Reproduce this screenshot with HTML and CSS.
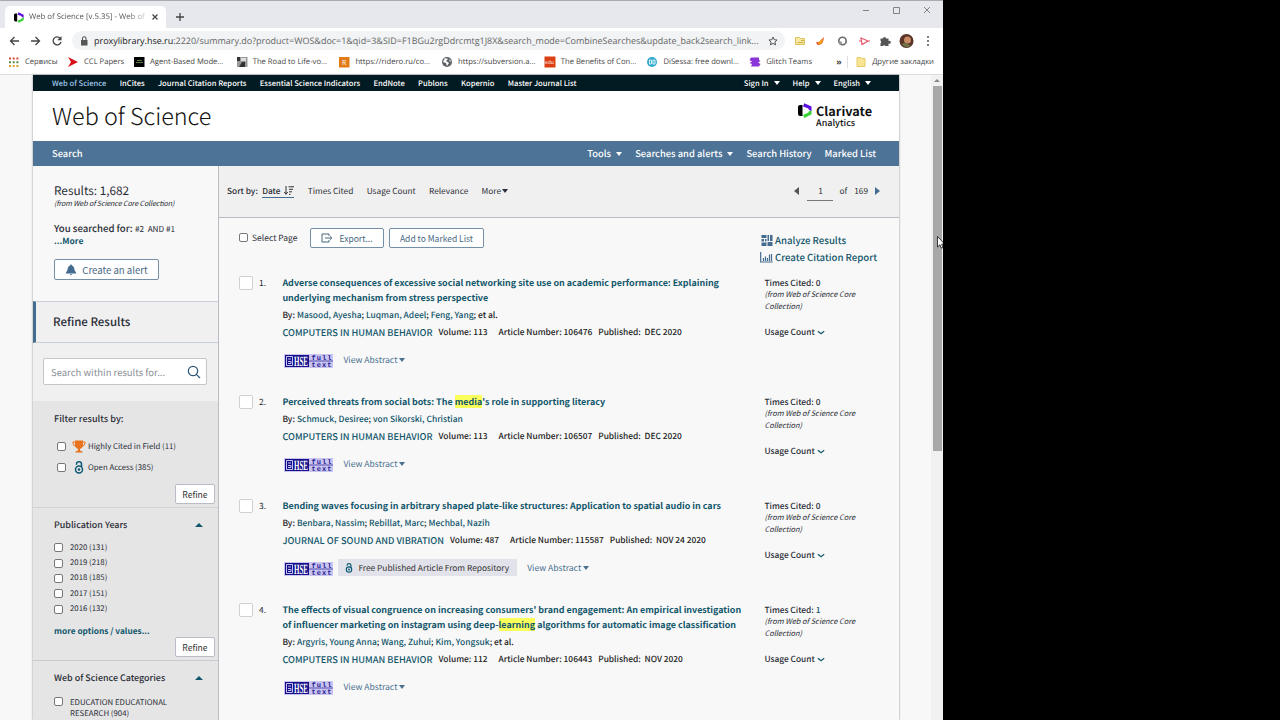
FILE: index.html
```html
<!DOCTYPE html>
<html lang="en">
<head>
  <meta charset="UTF-8">
  <title>Web of Science [v.5.35] - Web of Science</title>
  <link rel="stylesheet" href="styles.css">
</head>
<body>
<svg width="0" height="0" class="sprite">
  <symbol id="clarivate" viewBox="0 0 14 15">
    <path fill="#000" d="M4.500 2v11H2Q0 13 0 11V4Q0 2 2 2z"/>
    <path fill="#5b0fdc" d="M6.300.200 13.500 3.500V8.300L10.500 6.500V5.500L5 3.600z"/>
    <path fill="#36d430" d="M13.500 7.500v3.700L6.500 15 5 12l5.500-2.500V8.500z"/>
  </symbol>
  <symbol id="oa" viewBox="0 0 10 13">
    <g fill="none" stroke="#0e5a73" stroke-width="1.500"><circle cx="5" cy="8.500" r="3.500"/><path d="M2.500 3.700V3a2.500 2.200 0 0 1 5 0v3"/></g>
    <circle cx="5" cy="8.500" r="1.300" fill="#0e5a73"/>
  </symbol>
  <symbol id="hse" viewBox="0 0 49 14">
    <path fill="#c9c3f0" d="M0 0h49v14H0z"/>
    <path fill="#15108a" d="M1 1h24v12H1z"/>
    <path fill="none" stroke="#c9c3f0" d="M2.500 2.500h6v9h-6zM4 5h3M4 7.500h3v2H4"/>
    <text x="10" y="11.800" class="hse-name" textLength="14" lengthAdjust="spacingAndGlyphs">HSE</text>
    <path fill="#3b32a0" d="M25 6.600h24v.8H25z"/>
    <text x="27.500" y="6" class="hse-sub" textLength="20">full</text>
    <text x="27.500" y="12.800" class="hse-sub" textLength="20">text</text>
  </symbol>
</svg>
<div class="window">
  <div class="tabstrip">
    <div class="tab">
      <svg class="tab-logo"><use href="#clarivate"/></svg>
      <span class="tab-title">Web of Science [v.5.35] - Web of</span>
      <svg class="tab-close" viewBox="0 0 8 8"><path d="M1.500 1.500l5 5M6.500 1.500l-5 5" stroke="#444" stroke-width="1.200"/></svg>
    </div>
    <svg class="tab-new" viewBox="0 0 10 10"><path d="M5 1v8M1 5h8" stroke="#444" stroke-width="1.300"/></svg>
    <svg class="win-controls" viewBox="0 0 70 10"><path d="M1 5.500h6M31.500 2.500h6v6h-6zM62 2l6 6M68 2l-6 6" fill="none" stroke="#777" stroke-width=".9"/></svg>
  </div>
  <div class="toolbar">
    <svg class="nav-buttons" viewBox="0 0 56 12"><g fill="none" stroke="#444" stroke-width="1.300"><path d="M10 6H1.500M5.500 2l-4 4 4 4M22 6h8.500M26.500 2l4 4-4 4M51.200 3.300A4 4 0 1 0 52 7"/></g><path fill="#444" d="M52.500 1v4.300h-4.300z"/></svg>
    <div class="address">
      <svg class="lock" viewBox="0 0 8 10"><path fill="#555" d="M1 4h6.500v5.500H1z"/><path fill="none" stroke="#555" stroke-width="1.100" d="M2.500 4V2.500a1.700 1.700 0 0 1 3.500 0V4"/></svg>
      <span class="url"><b>proxylibrary.hse.ru</b>:2220/summary.do?product=WOS&amp;doc=1&amp;qid=3&amp;SID=F1BGu2rgDdrcmtg1J8X&amp;search_mode=CombineSearches&amp;update_back2search_link...</span>
      <svg class="star" viewBox="0 0 10 10"><path fill="none" stroke="#555" d="M5 1l1.200 2.700 2.900.3-2.200 2 .7 2.900L5 7.400 2.400 8.900l.7-2.900L.9 4l2.900-.3z"/></svg>
    </div>
    <svg class="extensions" viewBox="0 0 140 16">
      <path fill="#f7e8a2" stroke="#dcc25a" d="M2.500 4.500h4l1 1h4v6h-9z"/><path stroke="#cfb245" d="M4.500 9.500h6M8 7.500h3"/>
      <path fill="#e2531d" d="M23 9q3 1 5-2l3-3-1 5q-2 4-6 2.500z"/><path fill="#f5a01c" d="M25 10l4-4 1 2-3 4z"/>
      <circle cx="49.500" cy="8" r="3.700" fill="none" stroke="#666" stroke-width="1.600"/><circle cx="47.500" cy="10" r="1.700" fill="#999"/>
      <path fill="none" stroke="#e2576a" stroke-width="1.200" d="M68 5l7 3-6 3.500zM66 8h3M75 8h2"/>
      <path fill="#555" d="M87.500 5.500H90a1.500 1.500 0 1 1 3 0h2.500v2.500a1.500 1.500 0 1 1 0 2.500V13h-3a1.500 1.500 0 0 0-2.500 0h-2.500v-2.700a1.500 1.500 0 0 0 0-2.500z"/>
      <circle cx="113.500" cy="8" r="7" fill="#5a3426"/><circle cx="114.500" cy="7" r="3.500" fill="#c98b68"/><path fill="#6d7349" d="M108.500 11q5-3 9 2-5 3-9-2z"/>
      <g fill="#555"><circle cx="135" cy="4" r="1"/><circle cx="135" cy="8" r="1"/><circle cx="135" cy="12" r="1"/></g>
    </svg>
  </div>
  <div class="bookmarks">
    <span class="bm bm-apps"><svg viewBox="0 0 12 12"><g stroke-width="2" stroke-dasharray="2 1.700"><path stroke="#d9493a" d="M1 2.500h10"/><path stroke="#5a8a3c" d="M1 6.200h10"/><path stroke="#d9a21d" d="M1 9.900h10"/></g></svg>Сервисы</span>
    <span class="bm bm-ccl"><svg viewBox="0 0 12 12"><path fill="#d8101c" d="M1 1l10 5-10 5 3-5z"/></svg>CCL Papers</span>
    <span class="bm"><svg viewBox="0 0 12 12"><path d="M1 1h10.500v10H1z"/><path stroke="#5d7a4c" d="M3 6.500h7M4 4.500h5"/></svg>Agent-Based Mode...</span>
    <span class="bm"><svg viewBox="0 0 12 12"><path fill="#999" d="M1 1h10.500v10H1z"/><path fill="#333" d="M1 1h3v4H1zM6 6h3v5H3z"/><path fill="#ddd" d="M5 2h5v3H5z"/></svg>The Road to Life-vo...</span>
    <span class="bm"><svg viewBox="0 0 12 12"><path fill="#e27a17" d="M1 1h10.500v10.500H1z"/><text x="4" y="9" class="bm-letter">R</text></svg>https://ridero.ru/co...</span>
    <span class="bm"><svg viewBox="0 0 12 12"><circle cx="6" cy="6" r="5" fill="#5f6368"/><path fill="#fff" d="M4 2l3 1-2 2 3 2-2 3-1-3-3-1zM8 3l2 2-1 1z"/></svg>https://subversion.a...</span>
    <span class="bm"><svg viewBox="0 0 12 12"><path fill="#dd3f14" d="M.5.500h11v11H.5z"/><text x="1" y="8" class="bm-letter bm-small">edu</text></svg>The Benefits of Con...</span>
    <span class="bm"><svg viewBox="0 0 12 12"><circle cx="6" cy="6" r="5" fill="#33a9cf"/><path fill="none" stroke="#d8f3fa" d="M3.500 4h2v4h-2zM7 4h2v4H7z"/></svg>DiSessa: free downl...</span>
    <span class="bm bm-last"><svg viewBox="0 0 12 12"><path fill="#8a35d8" d="M2 1.500h8v2.500l1.500 1L9 6.500l2.500 1.500-1.500 2.500H2L3 8 .5 7 3 5.500.5 4z"/></svg>Glitch Teams</span>
    <span class="bm-more">»</span>
    <span class="bm bm-other"><svg viewBox="0 0 12 12"><path fill="#f9e694" stroke="#e6cc66" d="M2 1.500h4l1 1h3v8H2z"/></svg>Другие закладки</span>
  </div>

  <div class="viewport">
    <div class="page">
      <div class="topbar">
        <a class="current">Web of Science</a><a>InCites</a><a>Journal Citation Reports</a><a>Essential Science Indicators</a><a>EndNote</a><a>Publons</a><a>Kopernio</a><a>Master Journal List</a>
        <div class="account"><a>Sign In<i class="caret"></i></a><a>Help<i class="caret"></i></a><a>English<i class="caret"></i></a></div>
      </div>
      <div class="brand">
        <h1>Web of Science</h1>
        <div class="clarivate">
          <svg class="clarivate-mark"><use href="#clarivate"/></svg>
          <div><div class="clarivate-name">Clarivate</div><div class="clarivate-sub">Analytics</div></div>
        </div>
      </div>
      <div class="menubar">
        <a>Search</a>
        <div class="menu"><a>Tools<i class="caret"></i></a><a>Searches and alerts<i class="caret"></i></a><a>Search History</a><a>Marked List</a></div>
      </div>
      <div class="columns">
        <div class="sidebar">
          <div class="summary">
            <div class="count">Results: 1,682</div>
            <div class="from">(from Web of Science Core Collection)</div>
            <div class="query"><b>You searched for:</b> <span>#2 &nbsp;AND #1</span></div>
            <a class="more">...More</a>
            <button class="alert"><svg viewBox="0 0 12 12"><path fill="#446c90" d="M6 .5a1 1 0 0 1 1 1Q9.500 2.500 9.500 6L11.500 9.500H.5L2.500 6Q2.500 2.500 5 1.500a1 1 0 0 1 1-1zM4.500 10.300h3q-1.500 2-3 0z"/></svg><span>Create an alert</span></button>
          </div>
          <div class="refine-title">Refine Results</div>
          <div class="search-within">
            <div class="search-box"><span>Search within results for...</span><svg viewBox="0 0 14 14"><g fill="none" stroke="#2c5777" stroke-width="1.200"><circle cx="6" cy="6" r="4.700"/><path d="M9.300 9.300l3.700 3.700"/></g></svg></div>
          </div>
          <div class="filters">
            <div class="filter-heading">Filter results by:</div>
            <label class="quick"><i class="check"></i><svg class="trophy" viewBox="0 0 14 13"><path fill="#e8731f" d="M3 .5h8V6Q10 8.500 8 9v1.500l2.500 1v1h-7v-1l2.500-1V9Q4 8.500 3 6z"/><path fill="none" stroke="#e8731f" d="M3 2H.8q0 4 3 4.300M11 2h2.200q0 4-3 4.300"/></svg><span>Highly Cited in Field (11)</span></label>
            <label class="quick"><i class="check"></i><svg class="quick-oa"><use href="#oa"/></svg><span>Open Access (385)</span></label>
            <button class="refine">Refine</button>
          </div>
          <div class="facet facet-years">
            <div class="facet-title">Publication Years<i class="caret-up"></i></div>
            <label class="option"><i class="check"></i><span>2020 (131)</span></label>
            <label class="option"><i class="check"></i><span>2019 (218)</span></label>
            <label class="option"><i class="check"></i><span>2018 (185)</span></label>
            <label class="option"><i class="check"></i><span>2017 (151)</span></label>
            <label class="option"><i class="check"></i><span>2016 (132)</span></label>
            <a class="options-more">more options / values...</a>
            <button class="refine">Refine</button>
          </div>
          <div class="facet">
            <div class="facet-title">Web of Science Categories<i class="caret-up"></i></div>
            <label class="option option-wrap"><i class="check"></i><span>EDUCATION EDUCATIONAL<br>RESEARCH (904)</span></label>
          </div>
        </div>
        <div class="main">
          <div class="sortbar">
            <b>Sort by:</b>
            <a class="sort-active">Date<svg viewBox="0 0 10 10"><path fill="none" stroke="#333" d="M2 0v8M.3 6L2 8.300 3.700 6M4.500.8H10M5 3.300h4M5 5.800h3M5 8.300h1.500"/></svg></a>
            <a>Times Cited</a><a>Usage Count</a><a>Relevance</a><a>More<i class="caret"></i></a>
            <div class="pager"><i class="prev"></i><span class="page-no">1</span><span>of</span><span class="page-total">169</span><i class="next"></i></div>
          </div>
          <div class="actions">
            <i class="check"></i><span class="select-page">Select Page</span>
            <button class="export"><svg viewBox="0 0 12 10"><path fill="none" stroke="#47687f" d="M8 3V1H1v8h7V7M4 5h6.500M9 3.300L10.800 5 9 6.700"/></svg><span>Export...</span></button>
            <button class="add">Add to Marked List</button>
            <div class="reports">
              <a><svg viewBox="0 0 13 12"><path fill="#446c90" d="M1.500 1h5v3h-5zM1.500 5h2.500v2.500H1.500zM1.500 8.500h5V12h-5zM5 5h1.500v2.500H5zM7.500 1H9v6H7.500zM10 1h2.500v6H10zM7.500 8h5v4h-5z"/></svg><span>Analyze Results</span></a>
              <a><svg viewBox="0 0 13 12"><path fill="none" stroke="#446c90" stroke-width="1.200" d="M.7 1v10h12M3.500 10V7M5.500 10V5.500M7.500 10V7M9.500 10V3.500M11.500 10V3"/></svg><span>Create Citation Report</span></a>
            </div>
          </div>

          <div class="record">
            <i class="pick"></i><span class="num">1.</span>
            <div class="info">
              <a class="title">Adverse consequences of excessive social networking site use on academic performance: Explaining<br>underlying mechanism from stress perspective</a>
              <div class="by">By: <a>Masood, Ayesha</a>; <a>Luqman, Adeel</a>; <a>Feng, Yang</a>; et al.</div>
              <div class="source"><a>COMPUTERS IN HUMAN BEHAVIOR</a><span class="volume">Volume: 113</span><span class="number">Article Number: 106476</span><span>Published: &nbsp;DEC 2020</span></div>
              <div class="links"><svg class="hse"><use href="#hse"/></svg><a class="abstract">View Abstract<i class="caret"></i></a></div>
            </div>
            <div class="cited"><b>Times Cited: 0</b><em>(from Web of Science Core<br>Collection)</em><b class="usage">Usage Count<svg viewBox="0 0 8 5"><path d="M.8 1.200L4 3.700l3.200-2.500"/></svg></b></div>
          </div>
          <div class="record">
            <i class="pick"></i><span class="num">2.</span>
            <div class="info">
              <a class="title">Perceived threats from social bots: The <mark>media</mark>'s role in supporting literacy</a>
              <div class="by">By: <a>Schmuck, Desiree</a>; <a>von Sikorski, Christian</a></div>
              <div class="source"><a>COMPUTERS IN HUMAN BEHAVIOR</a><span class="volume">Volume: 113</span><span class="number">Article Number: 106507</span><span>Published: &nbsp;DEC 2020</span></div>
              <div class="links"><svg class="hse"><use href="#hse"/></svg><a class="abstract">View Abstract<i class="caret"></i></a></div>
            </div>
            <div class="cited"><b>Times Cited: 0</b><em>(from Web of Science Core<br>Collection)</em><b class="usage">Usage Count<svg viewBox="0 0 8 5"><path d="M.8 1.200L4 3.700l3.200-2.500"/></svg></b></div>
          </div>
          <div class="record">
            <i class="pick"></i><span class="num">3.</span>
            <div class="info">
              <a class="title">Bending waves focusing in arbitrary shaped plate-like structures: Application to spatial audio in cars</a>
              <div class="by">By: <a>Benbara, Nassim</a>; <a>Rebillat, Marc</a>; <a>Mechbal, Nazih</a></div>
              <div class="source"><a>JOURNAL OF SOUND AND VIBRATION</a><span class="volume">Volume: 487</span><span class="number">Article Number: 115587</span><span>Published: &nbsp;NOV 24 2020</span></div>
              <div class="links"><svg class="hse"><use href="#hse"/></svg><a class="free"><svg><use href="#oa"/></svg><span>Free Published Article From Repository</span></a><a class="abstract">View Abstract<i class="caret"></i></a></div>
            </div>
            <div class="cited"><b>Times Cited: 0</b><em>(from Web of Science Core<br>Collection)</em><b class="usage">Usage Count<svg viewBox="0 0 8 5"><path d="M.8 1.200L4 3.700l3.200-2.500"/></svg></b></div>
          </div>
          <div class="record">
            <i class="pick"></i><span class="num">4.</span>
            <div class="info">
              <a class="title">The effects of visual congruence on increasing consumers' brand engagement: An empirical investigation<br>of influencer marketing on instagram using deep-<mark>learning</mark> algorithms for automatic image classification</a>
              <div class="by">By: <a>Argyris, Young Anna</a>; <a>Wang, Zuhui</a>; <a>Kim, Yongsuk</a>; et al.</div>
              <div class="source"><a>COMPUTERS IN HUMAN BEHAVIOR</a><span class="volume">Volume: 112</span><span class="number">Article Number: 106443</span><span>Published: &nbsp;NOV 2020</span></div>
              <div class="links"><svg class="hse"><use href="#hse"/></svg><a class="abstract">View Abstract<i class="caret"></i></a></div>
            </div>
            <div class="cited"><b>Times Cited: <a>1</a></b><em>(from Web of Science Core<br>Collection)</em><b class="usage">Usage Count<svg viewBox="0 0 8 5"><path d="M.8 1.200L4 3.700l3.200-2.500"/></svg></b></div>
          </div>
        </div>
      </div>
    </div>
    <div class="scrollbar"><i class="scroll-up"></i><div class="thumb"></div></div>
  </div>
  <svg class="cursor" viewBox="0 0 9 13"><path fill="#fff" stroke="#222" stroke-width=".9" d="M.5.500v10.500l2.400-2.200 1.500 3.400 1.700-.8-1.500-3.200h3.300z"/></svg>
</div>
</body>
</html>
```
FILE: styles.css
```css
* {
    box-sizing: border-box;
}
body {
    margin: 0;
    background: #000;
    font-family: "Noto Sans CJK SC", "Open Sans", sans-serif;
    font-size: 8.5px;
    line-height: 12px;
    color: #2a2d35;
    white-space: nowrap;
    text-rendering: geometricPrecision;
}
svg {
    display: block;
    flex: none;
}
i {
    display: block;
    flex: none;
}
b {
    font-weight: 500;
}
button {
    display: flex;
    align-items: center;
    justify-content: center;
    padding: 0;
    font: inherit;
    color: #47687f;
    background: #fff;
    border: 1px solid #7590a6;
    border-radius: 2px;
}
.sprite {
    position: absolute;
}
.window {
    position: relative;
    width: 943px;
    height: 720px;
    overflow: hidden;
    display: flex;
    flex-direction: column;
    background: #fff;
}

/* browser frame */
.tabstrip {
    height: 28px;
    display: flex;
    align-items: center;
    padding: 5px 8px 0 5px;
    background: #e7e8ed;
    border-top: 1px solid #a9a9b0;
    font-family: "Open Sans", sans-serif;
}
.tab {
    width: 161px;
    height: 22px;
    display: flex;
    align-items: center;
    padding-left: 9px;
    background: #fff;
    border-radius: 5px 5px 0 0;
}
.tab-logo {
    width: 10px;
    height: 11px;
}
.tab-title {
    width: 116px;
    margin: 0 6px 0 5px;
    font-size: 7.8px;
    color: #555;
    -webkit-mask-image: linear-gradient(90deg, #000 85%, transparent 105%);
}
.tab-close {
    width: 8px;
    height: 8px;
}
.tab-new {
    width: 10px;
    height: 10px;
    margin-left: 9px;
}
.win-controls {
    width: 70px;
    height: 10px;
    margin: -14px 3px 0 auto;
}
.toolbar {
    height: 25px;
    display: flex;
    align-items: center;
    padding-left: 9px;
}
.nav-buttons {
    width: 56px;
    height: 12px;
}
.address {
    width: 713px;
    height: 19px;
    display: flex;
    align-items: center;
    margin: 0 8px 0 7px;
    padding-left: 8px;
    background: #f1f3f4;
    border-radius: 10px;
    font-family: "Open Sans", sans-serif;
}
.lock {
    width: 8px;
    height: 10px;
    margin-right: 6px;
}
.url {
    width: 674px;
    font-size: 8.97px;
    color: #666;
}
.url b {
    font-weight: 400;
    color: #222;
}
.star {
    width: 10px;
    height: 10px;
}
.extensions {
    width: 140px;
    height: 16px;
}
.bookmarks {
    height: 22px;
    display: flex;
    align-items: center;
    padding: 0 0 3px 8px;
    border-bottom: 1px solid #dcdcdf;
    font-family: "Open Sans", sans-serif;
    font-size: 7.65px;
    color: #444;
}
.bm {
    width: 102.7px;
    display: flex;
    align-items: center;
    gap: 5px;
}
.bm svg {
    width: 12px;
    height: 12px;
}
.bm-apps {
    width: 59px;
}
.bm-ccl {
    width: 66px;
}
.bm-last {
    width: 87px;
}
.bm-more {
    width: 11px;
    font-size: 9px;
    font-weight: 700;
}
.bm-other {
    width: auto;
    padding-left: 7px;
    border-left: 1px solid #ddd;
}
.bm-letter {
    font: 7px "Open Sans";
    fill: #fff;
}
.bm-small {
    font-size: 5px;
}

/* page */
.viewport {
    flex: 1;
    min-height: 0;
    display: flex;
    padding-left: 33px;
    background: #f8f8f9;
}
.page {
    width: 866px;
    margin-right: 32px;
    display: flex;
    flex-direction: column;
    background: #f8f8f8;
    box-shadow: 0 0 2px rgba(0, 0, 0, .45);
}
.page a {
    color: #11566b;
}
.caret {
    display: inline-block;
    margin-left: 5px;
    border: 3.5px solid transparent;
    border-top: 4px solid;
    border-bottom: 0;
    vertical-align: 1px;
}
.topbar {
    height: 16px;
    display: flex;
    align-items: center;
    gap: 13.3px;
    padding: 1px 28px 0 19px;
    background: #021a22;
    font-size: 7.6px;
    font-weight: 500;
}
.page .topbar a {
    color: #fff;
}
.page .topbar .current {
    color: #9fc6ea;
}
.account {
    display: flex;
    gap: 13px;
    margin-left: auto;
}
.brand {
    height: 50px;
    display: flex;
    align-items: center;
    justify-content: space-between;
    padding: 0 27px 3px 19px;
    background: #fff;
}
h1 {
    margin: 0;
    font-size: 23.4px;
    font-weight: 300;
    line-height: 30px;
    color: #111;
}
.clarivate {
    display: flex;
    gap: 4px;
    margin-top: 3px;
    color: #111;
}
.clarivate-mark {
    width: 14px;
    height: 15px;
    margin-top: -1px;
}
.clarivate-name {
    font-size: 12.7px;
    font-weight: 700;
    line-height: 14px;
}
.clarivate-sub {
    font-size: 9px;
    font-weight: 500;
    line-height: 10px;
}
.menubar {
    height: 25px;
    display: flex;
    align-items: center;
    justify-content: space-between;
    padding: 0 23px 1px 19px;
    background: #4d7397;
    font-size: 9.4px;
    font-weight: 500;
}
.page .menubar a {
    color: #fff;
}
.menu {
    display: flex;
    gap: 13px;
}
.columns {
    flex: 1;
    min-height: 0;
    display: flex;
}

/* sidebar */
.sidebar {
    width: 186px;
    border-right: 1px solid #b9bcc2;
    background: #e5e5e6;
}
.summary {
    height: 135px;
    padding: 18px 0 0 21px;
    background: #f8f8f8;
}
.count {
    font-size: 11.8px;
    line-height: 14px;
}
.from {
    font-size: 7.2px;
    font-style: italic;
    letter-spacing: -.15px;
}
.query {
    margin-top: 12px;
    font-size: 9.6px;
}
.query span {
    font-size: 8.2px;
}
.more {
    display: block;
    font-weight: 700;
}
.alert {
    width: 105px;
    height: 21px;
    margin-top: 12px;
    gap: 5px;
    font-size: 9.6px;
}
.alert svg {
    width: 12px;
    height: 12px;
}
.refine-title {
    height: 42px;
    padding: 0 17px;
    border: 1px solid #c8cfd8;
    border-width: 1px 0;
    border-left: 3px solid #446c90;
    background: #f0f0f1;
    font-size: 11.5px;
    font-weight: 500;
    line-height: 41px;
}
.search-within {
    height: 58px;
    padding: 15px 11px 0 10px;
    background: #f0f0f1;
}
.search-box {
    height: 27px;
    display: flex;
    align-items: center;
    justify-content: space-between;
    padding: 0 5px 0 7px;
    background: #fff;
    border: 1px solid #c5c5ca;
    border-radius: 2px;
    font-size: 9.5px;
    color: #8b8f96;
}
.search-box svg {
    width: 14px;
    height: 14px;
}
.check {
    width: 9px;
    height: 9px;
    background: #fff;
    border: 1px solid #777;
    border-radius: 2px;
}
.filters {
    height: 107px;
    padding: 11px 3px 0 21px;
    border-bottom: 1px solid #d3d3d7;
}
.filter-heading {
    margin-bottom: 16px;
    font-size: 9.1px;
    font-weight: 500;
}
.quick {
    height: 12px;
    display: flex;
    align-items: center;
    margin-bottom: 9px;
    padding-left: 3px;
}
.quick span {
    padding-top: 1px;
    font-size: 7.8px;
}
.trophy {
    width: 14px;
    height: 13px;
    margin: 0 2px 0 6px;
}
.quick-oa {
    width: 10px;
    height: 13px;
    margin: 0 4px 0 8px;
}
.refine {
    width: 40px;
    height: 20px;
    margin-left: auto;
    border-color: #b9bcc4;
    font-size: 8.6px;
    color: #333;
}
.filters .refine {
    margin-top: 11px;
}
.facet {
    padding: 11px 3px 0 21px;
}
.facet-years {
    height: 153px;
    border-bottom: 1px solid #c9c9cf;
}
.facet-title {
    display: flex;
    align-items: center;
    justify-content: space-between;
    margin-bottom: 9px;
    padding-right: 12px;
    font-size: 8.95px;
    font-weight: 500;
}
.caret-up {
    border: 4px solid transparent;
    border-bottom: 4px solid #11566b;
    border-top: 0;
}
.option {
    height: 15.4px;
    display: flex;
    align-items: center;
    gap: 7px;
}
.option span {
    font-size: 7.8px;
}
.options-more {
    display: block;
    margin: 8px 0 0;
    font-size: 8.3px;
    font-weight: 700;
}
.option-wrap {
    height: auto;
    align-items: flex-start;
    margin-top: 13px;
    line-height: 11px;
}

/* results */
.main {
    flex: 1;
}
.sortbar {
    height: 52px;
    display: flex;
    align-items: center;
    gap: 13.3px;
    padding: 0 19px 1px 8px;
    border-bottom: 1px solid #b9bcc2;
    background: #f0f0f0;
    font-size: 8.3px;
}
.sortbar > b {
    margin-right: -9px;
}
.page .sortbar a {
    color: #2a2d35;
}
.page .sort-active {
    display: flex;
    align-items: center;
    gap: 4px;
    border-bottom: 1px solid #446c90;
    font-weight: 500;
}
.sort-active svg {
    width: 10px;
    height: 10px;
}
.sortbar .caret {
    margin-left: 1px;
}
.pager {
    display: flex;
    align-items: center;
    margin-left: auto;
}
.page-no {
    width: 26px;
    height: 19px;
    margin: 0 6px 0 8px;
    border-bottom: 1px solid #777;
    line-height: 19px;
    text-align: center;
}
.page-total {
    margin: 0 7px 0 7px;
}
.prev, .next {
    border: 4px solid transparent;
}
.prev {
    border-right: 5px solid #555;
    border-left: 0;
}
.next {
    border-left: 5px solid #446c90;
    border-right: 0;
}
.actions {
    height: 57px;
    display: flex;
    align-items: flex-start;
    padding: 10px 0 0 20px;
}
.actions .check {
    margin-top: 5px;
}
.select-page {
    width: 58px;
    margin: 4px 0 0 4px;
}
.export, .add {
    height: 20px;
    font-size: 8.5px;
}
.export {
    width: 74px;
    gap: 6px;
}
.export svg {
    width: 12px;
    height: 10px;
}
.add {
    width: 95px;
    margin-left: 5px;
}
.reports {
    margin: 3px 22px 0 auto;
    font-size: 9.65px;
    font-weight: 500;
}
.reports a {
    display: flex;
    align-items: center;
    gap: 2px;
    height: 17.5px;
}
.reports svg {
    width: 13px;
    height: 12px;
}
.record {
    display: flex;
    align-items: flex-start;
    margin-bottom: 26px;
    padding-left: 20px;
}
.pick {
    width: 14px;
    height: 14px;
    margin-top: 1px;
    background: #fff;
    border: 1px solid #cfcfd4;
    border-radius: 2px;
}
.num {
    width: 23px;
    margin: 2px 0 0 6px;
}
.info {
    width: 482px;
    padding-left: .4px;
    color: #222;
}
.title {
    display: block;
    font-size: 8.95px;
    font-weight: 700;
    line-height: 15px;
}
mark {
    background: #fbff5a;
    color: inherit;
}
.by {
    margin-top: 4px;
    font-size: 8.45px;
    font-weight: 500;
}
.source {
    display: flex;
    margin-top: 5px;
    font-size: 8.4px;
    font-weight: 500;
}
.source a {
    font-size: 9.2px;
}
.volume {
    margin: 0 11px 0 6px;
}
.number {
    margin-right: 6px;
}
.links {
    height: 17px;
    display: flex;
    align-items: center;
    margin-top: 13px;
    padding-left: 2px;
}
.hse {
    width: 49px;
    height: 14px;
    margin-top: 2px;
}
.hse-name {
    font: bold 14px "Liberation Serif";
    fill: #fff;
}
.hse-sub {
    font: bold 7px "Liberation Mono";
    fill: #241c90;
}
.page .abstract {
    margin-left: 10px;
    font-size: 8.6px;
    color: #4a7190;
}
.abstract .caret {
    margin-left: 2px;
    border-width: 4px 3px 0;
}
.free {
    height: 17px;
    display: flex;
    align-items: center;
    gap: 5px;
    margin-left: 5px;
    padding: 0 8px 0 7px;
    background: #e2e2ea;
    font-size: 8.35px;
}
.page .free {
    color: #333;
}
.free svg {
    width: 8px;
    height: 10px;
}
.cited {
    padding: 2px 0 0 .4px;
    font-size: 8.35px;
}
.cited b, .cited em {
    display: block;
}
.cited em {
    font-size: 7.45px;
}
.cited .usage {
    display: flex;
    align-items: center;
    gap: 2px;
    margin-top: 13px;
}
.usage svg {
    width: 8px;
    height: 5px;
    fill: none;
    stroke: #11566b;
    stroke-width: 1.2;
}
.scrollbar {
    width: 12px;
    padding-top: 4px;
    background: #f1f1f2;
}
.scroll-up {
    width: 6px;
    margin: 0 auto 4px;
    border: 3px solid transparent;
    border-top: 0;
    border-bottom-color: #888;
}
.thumb {
    width: 9px;
    height: 365px;
    margin: 0 auto;
    background: #a8a8a8;
}
.cursor {
    position: absolute;
    top: 236px;
    left: 937px;
    width: 9px;
    height: 13px;
}
```
